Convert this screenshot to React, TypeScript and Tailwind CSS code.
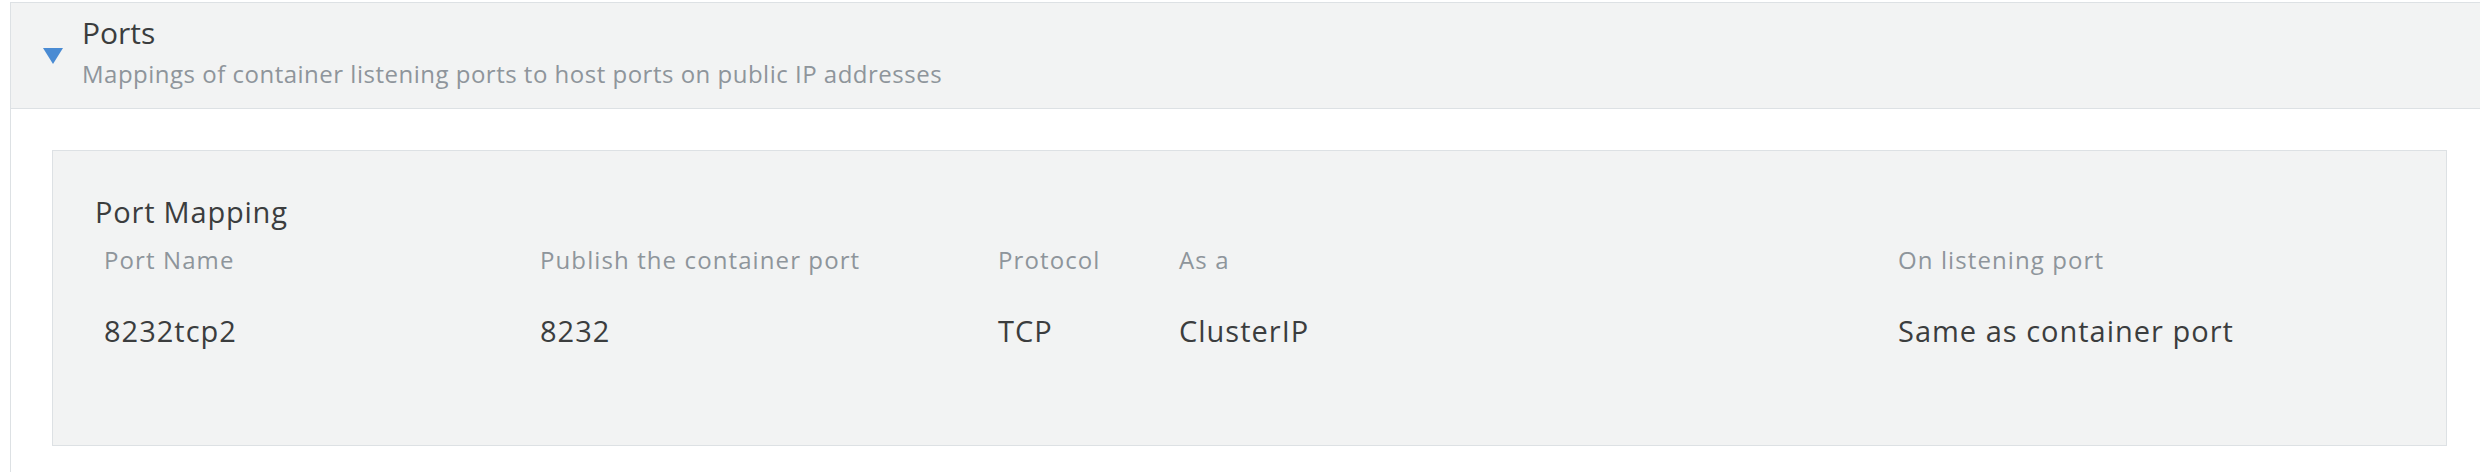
import React from 'react';

const columns = [
    { label: 'Port Name', value: '8232tcp2' },
    { label: 'Publish the container port', value: '8232' },
    { label: 'Protocol', value: 'TCP' },
    { label: 'As a', value: 'ClusterIP' },
    { label: 'On listening port', value: 'Same as container port' },
];

export default function App() {
    return (
        <div className="h-[472px] overflow-hidden bg-white pt-[2px] pl-[10px]" style={{ fontFamily: '"Open Sans", Lato, sans-serif' }}>
            <section className="w-[2480px] border border-b-0 border-[#dde1e4]">
                {/* Accordion header */}
                <div className="flex items-center h-[106px] bg-[#f2f3f3] border-b border-[#dde1e4]">
                    <div className="ml-[32px] mr-[19px] w-0 h-0 border-l-[10px] border-r-[10px] border-t-[16px] border-l-transparent border-r-transparent border-t-[#4a8bd3]" />
                    <div className="self-start pt-[12px]">
                        <h4 className="text-[30px] leading-[36px] text-[#3b3d3e]">Ports</h4>
                        <p className="mt-[8px] text-[24px] leading-[30px] tracking-[0.5px] text-[#8e959b]">Mappings of container listening ports to host ports on public IP addresses</p>
                    </div>
                </div>

                {/* Body */}
                <div className="pt-[41px] pl-[41px] pb-[40px]">
                    <div className="w-[2395px] h-[296px] bg-[#f2f3f3] border border-[#dde1e4] pt-[43px] pl-[42px]">
                        <h5 className="text-[29px] leading-[35px] tracking-[0.8px] text-[#3b3d3e]">Port Mapping</h5>
                        <div className="ml-[9px] mt-[16px] grid grid-cols-[436px_458px_181px_719px_1fr]">
                            {columns.map(c => (
                                <div key={c.label} className="text-[24px] leading-[29px] tracking-[1.1px] text-[#8e959b] whitespace-nowrap">{c.label}</div>
                            ))}
                            {columns.map(c => (
                                <div key={c.value} className="mt-[39px] text-[29px] leading-[35px] tracking-[1px] text-[#3b3d3e] whitespace-nowrap">{c.value}</div>
                            ))}
                        </div>
                    </div>
                </div>
            </section>
        </div>
    );
}
